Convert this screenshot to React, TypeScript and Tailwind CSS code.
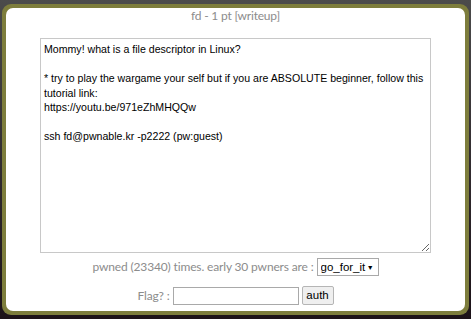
import React, { useState } from 'react';

const App: React.FC = () => {
  const [flag, setFlag] = useState('');

  const text =
    'Mommy! what is a file descriptor in Linux?\n\n* try to play the wargame your self but if you are ABSOLUTE beginner, follow this tutorial link:\nhttps://youtu.be/971eZhMHQQw\n\nssh fd@pwnable.kr -p2222 (pw:guest)';

  return (
    <div className="w-[471px] h-[319px] bg-gradient-to-b from-[#4b4b4b] to-[#1c1218] pt-[4px] px-[2px] pb-[4px]">
      <div className="h-full rounded-[9px] bg-[#7d7d3c] p-[4px]">
        <div className="h-full rounded-[7px] bg-white flex flex-col items-center font-['Lato',sans-serif] text-[#8c8c8c]">
          <div className="text-[12px] tracking-[-0.2px] leading-[16px]">fd - 1 pt [writeup]</div>
          <textarea
            readOnly
            defaultValue={text}
            className="mt-[14px] w-[391px] h-[215px] border border-[#c8c8c8] pl-[3px] pr-0 pt-[3px] font-['Liberation_Sans',Arial,sans-serif] text-[10.6px] leading-[14.5px] text-black resize-y outline-none overflow-hidden"
          />
          <div className="mt-[4px] flex items-center text-[12px] tracking-[-0.15px] h-[20px]">
            <span>pwned (23340) times. early 30 pwners are :</span>
            <div className="relative ml-[3px]">
              <select className="appearance-none w-[62px] h-[18px] border border-[#a9a9a9] text-black font-['Liberation_Sans',Arial,sans-serif] text-[11.5px] pl-[3px] pr-[12px] bg-white tracking-normal">
                <option>go_for_it</option>
              </select>
              <span className="absolute right-[5px] top-[4px] text-[7px] text-black pointer-events-none">▼</span>
            </div>
          </div>
          <div className="mt-[9px] flex items-center text-[12px] tracking-[-0.15px]">
            <span>Flag? :</span>
            <input
              value={flag}
              onChange={(e) => setFlag(e.target.value)}
              className="ml-[3px] w-[126px] h-[18px] border border-[#a9a9a9] outline-none text-black text-[11px]"
            />
            <button className="ml-[3px] h-[19px] w-[32px] border border-[#b5b5b5] rounded-[2px] bg-[#efefef] text-black font-['Liberation_Sans',Arial,sans-serif] text-[11.5px] leading-none tracking-normal">
              auth
            </button>
          </div>
        </div>
      </div>
    </div>
  );
};

export default App;
